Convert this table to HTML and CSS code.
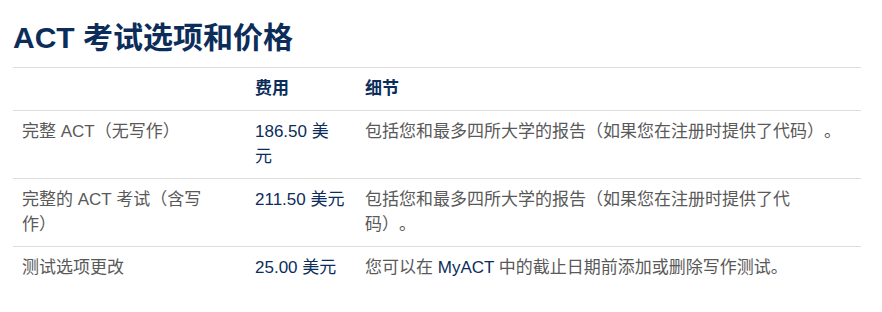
FILE: index.html
```html
<!DOCTYPE html>
<html lang="zh-CN">
<head>
<meta charset="utf-8">
<link rel="stylesheet" href="styles.css">
</head>
<body>
<div class="page">
  <h1 class="title">ACT 考试选项和价格</h1>
  <table class="prices">
    <thead>
      <tr>
        <th class="c1"></th>
        <th class="c2">费用</th>
        <th class="c3">细节</th>
      </tr>
    </thead>
    <tbody>
      <tr>
        <td class="c1">完整 ACT（无写作）</td>
        <td class="c2 fee">186.50 美<br>元</td>
        <td class="c3">包括您和最多四所大学的报告（如果您在注册时提供了代码）。</td>
      </tr>
      <tr>
        <td class="c1">完整的 ACT 考试（含写<br>作）</td>
        <td class="c2 fee">211.50 美元</td>
        <td class="c3">包括您和最多四所大学的报告（如果您在注册时提供了代<br>码）。</td>
      </tr>
      <tr>
        <td class="c1">测试选项更改</td>
        <td class="c2 fee">25.00 美元</td>
        <td class="c3">您可以在 <span class="brand">MyACT</span> 中的截止日期前添加或删除写作测试。</td>
      </tr>
    </tbody>
  </table>
</div>
</body>
</html>
```

FILE: styles.css
```css
html, body {
  margin: 0;
  padding: 0;
  background: #ffffff;
}

.page {
  padding: 20px 21px 0 13px;
  font-family: "Liberation Sans", Arial, "Noto Sans CJK SC", sans-serif;
  text-spacing-trim: space-all;
  font-feature-settings: "chws" 0, "halt" 0, "palt" 0;
}

.title {
  margin: 0 0 11px 0;
  font-size: 30px;
  line-height: 36px;
  font-weight: bold;
  color: #0c2d5a;
}

.prices {
  width: 100%;
  border-collapse: collapse;
  table-layout: fixed;
  font-size: 17px;
  line-height: 25.5px;
}

.prices th,
.prices td {
  border-top: 1px solid #dddddd;
  padding: 8px 8px 8px 9px;
  text-align: left;
  vertical-align: top;
}

.prices th {
  font-weight: bold;
  color: #0c2d5a;
}

.c1 { width: 216px; }
.c2 { width: 93px; }

.prices td {
  color: #595959;
}

.prices td.fee {
  color: #0c2d5a;
}

.brand {
  color: #0c2d5a;
}
```
